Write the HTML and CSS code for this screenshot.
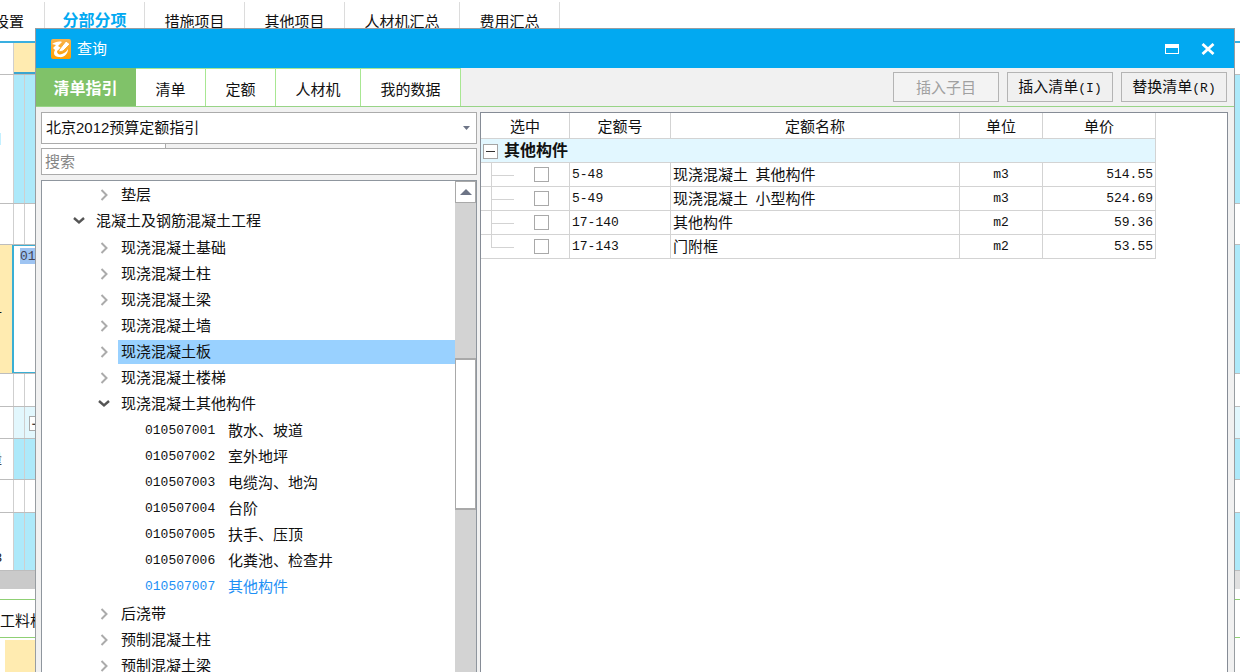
FILE: index.html
```html
<!DOCTYPE html>
<html lang="zh-CN">
<head>
<meta charset="utf-8">
<title>查询</title>
<link rel="stylesheet" href="styles.css">
</head>
<body>
<svg class="defs" aria-hidden="true">
  <symbol id="closed" viewBox="0 0 16 16"><path d="M5.5 3 L10.5 8 L5.5 13" fill="none" stroke="#ababab" stroke-width="2"/></symbol>
  <symbol id="open" viewBox="0 0 16 16"><path d="M3 5 L8 9.5 L13 5" fill="none" stroke="#555" stroke-width="2.4"/></symbol>
</svg>

<main class="app">
  <nav class="app-tabs">
    <a class="app-tab first" href="#">设置</a>
    <a class="app-tab current" href="#">分部分项</a>
    <a class="app-tab" href="#">措施项目</a>
    <a class="app-tab" href="#">其他项目</a>
    <a class="app-tab wide" href="#">人材机汇总</a>
    <a class="app-tab" href="#">费用汇总</a>
  </nav>
  <div class="sheet">
    <div class="line head"><i></i><b></b><u></u></div>
    <div class="line blue h129"><i><span>目</span></i><i></i><b></b><u></u></div>
    <div class="line h41"><i></i><i></i><b></b><u></u></div>
    <div class="line active h129"><i><span>1</span></i><b><mark class="mono">01</mark></b><u></u></div>
    <div class="line h33"><i></i><i></i><b></b><u></u></div>
    <div class="line pale h32"><i></i><i></i><b><em>−</em></b><u></u></div>
    <div class="line blue h41"><i><span>量</span></i><i></i><b></b><u></u></div>
    <div class="line h33"><i></i><i></i><b></b><u></u></div>
    <div class="line blue h58"><i><span class="low">3</span></i><i></i><b></b><u></u></div>
  </div>
  <div class="hscroll"></div>
  <div class="lower-tabs"><a href="#">工料机显示</a></div>
  <div class="lower-head"></div>
</main>

<section class="dialog" role="dialog" aria-labelledby="dialog-title">
  <header class="title-bar">
    <svg class="logo" viewBox="0 0 20 20" aria-hidden="true">
      <defs><linearGradient id="gold" x1="0" y1="0" x2="0" y2="1"><stop offset="0" stop-color="#f9b24c"/><stop offset="1" stop-color="#ffa000"/></linearGradient></defs>
      <rect width="20" height="20" rx="2" fill="url(#gold)"/>
      <path d="M1 5 C4 3 8 2 11 3 L7 7 L10 9 L6 12 C6 15 8 16 11 15 C14 14 16 12 17 10 C17 15 13 19 8 18 C3 18 2 14 4 11 L2 9 L5 6 Z" fill="#fff"/>
      <path d="M8 11 L15 2 L19 5 L12 12 L8 13 Z" fill="#fff" stroke="#f8ab34" stroke-width="1"/>
    </svg>
    <h1 id="dialog-title">查询</h1>
    <button class="win-button" aria-label="最大化"><svg viewBox="0 0 14 10" width="14" height="10"><path d="M0 0H14V10H0Z M1 4V9H13V4Z" fill="#fff" fill-rule="evenodd"/></svg></button>
    <button class="win-button" aria-label="关闭"><svg viewBox="0 0 14 12" width="14" height="12"><path d="M1.5 1 L12.5 11 M12.5 1 L1.5 11" stroke="#fff" stroke-width="2.8"/></svg></button>
  </header>

  <div class="tool-bar">
    <button class="tab current">清单指引</button>
    <button class="tab short">清单</button>
    <button class="tab short">定额</button>
    <button class="tab medium">人材机</button>
    <button class="tab">我的数据</button>
    <div class="actions">
      <button class="action" disabled>插入子目</button>
      <button class="action">插入清单<span class="mono">(I)</span></button>
      <button class="action">替换清单<span class="mono">(R)</span></button>
    </div>
  </div>

  <div class="panes">
    <div class="left-pane">
      <div class="combo">
        <select aria-label="定额指引"><option>北京2012预算定额指引</option></select>
        <svg viewBox="0 0 7 4" width="7" height="4" aria-hidden="true"><path d="M0 0H7L3.5 4Z" fill="#6d7486"/></svg>
      </div>
      <div class="combo-foot"></div>
      <input class="search" type="text" placeholder="搜索" aria-label="搜索">
      <div class="tree-box">
        <ul class="tree">
          <li><ul>
            <li><div class="node"><button aria-label="展开"><svg><use href="#closed"/></svg></button><span>垫层</span></div></li>
          </ul></li>
          <li><div class="node"><button aria-label="折叠"><svg><use href="#open"/></svg></button><span>混凝土及钢筋混凝土工程</span></div>
            <ul class="group">
              <li><div class="node"><button aria-label="展开"><svg><use href="#closed"/></svg></button><span>现浇混凝土基础</span></div></li>
              <li><div class="node"><button aria-label="展开"><svg><use href="#closed"/></svg></button><span>现浇混凝土柱</span></div></li>
              <li><div class="node"><button aria-label="展开"><svg><use href="#closed"/></svg></button><span>现浇混凝土梁</span></div></li>
              <li><div class="node"><button aria-label="展开"><svg><use href="#closed"/></svg></button><span>现浇混凝土墙</span></div></li>
              <li><div class="node selected"><button aria-label="展开"><svg><use href="#closed"/></svg></button><span>现浇混凝土板</span></div></li>
              <li><div class="node"><button aria-label="展开"><svg><use href="#closed"/></svg></button><span>现浇混凝土楼梯</span></div></li>
              <li><div class="node"><button aria-label="折叠"><svg><use href="#open"/></svg></button><span>现浇混凝土其他构件</span></div>
                <ul class="group">
                  <li><div class="node leaf"><code>010507001</code>散水、坡道</div></li>
                  <li><div class="node leaf"><code>010507002</code>室外地坪</div></li>
                  <li><div class="node leaf"><code>010507003</code>电缆沟、地沟</div></li>
                  <li><div class="node leaf"><code>010507004</code>台阶</div></li>
                  <li><div class="node leaf"><code>010507005</code>扶手、压顶</div></li>
                  <li><div class="node leaf"><code>010507006</code>化粪池、检查井</div></li>
                  <li><div class="node leaf picked"><code>010507007</code>其他构件</div></li>
                </ul>
              </li>
              <li><div class="node"><button aria-label="展开"><svg><use href="#closed"/></svg></button><span>后浇带</span></div></li>
              <li><div class="node"><button aria-label="展开"><svg><use href="#closed"/></svg></button><span>预制混凝土柱</span></div></li>
              <li><div class="node"><button aria-label="展开"><svg><use href="#closed"/></svg></button><span>预制混凝土梁</span></div></li>
            </ul>
          </li>
        </ul>
        <div class="scroll-bar">
          <button aria-label="向上滚动"><svg viewBox="0 0 12 6" width="12" height="6"><path d="M6 0L12 6H0Z" fill="#6d7486"/></svg></button>
          <div class="thumb"></div>
        </div>
      </div>
    </div>

    <div class="right-pane">
      <table>
        <colgroup><col class="c-pick"><col class="c-code"><col class="c-name"><col class="c-unit"><col class="c-price"></colgroup>
        <thead><tr><th>选中</th><th>定额号</th><th>定额名称</th><th>单位</th><th>单价</th></tr></thead>
        <tbody>
          <tr class="group-row"><td colspan="5"><div><button aria-label="折叠"></button>其他构件</div></td></tr>
          <tr><td class="pick"><input type="checkbox" aria-label="5-48"></td><td class="mono">5-48</td><td>现浇混凝土&ensp;其他构件</td><td class="unit mono">m3</td><td class="price mono">514.55</td></tr>
          <tr><td class="pick"><input type="checkbox" aria-label="5-49"></td><td class="mono">5-49</td><td>现浇混凝土&ensp;小型构件</td><td class="unit mono">m3</td><td class="price mono">524.69</td></tr>
          <tr><td class="pick"><input type="checkbox" aria-label="17-140"></td><td class="mono">17-140</td><td>其他构件</td><td class="unit mono">m2</td><td class="price mono">59.36</td></tr>
          <tr><td class="pick last"><input type="checkbox" aria-label="17-143"></td><td class="mono">17-143</td><td>门附框</td><td class="unit mono">m2</td><td class="price mono">53.55</td></tr>
        </tbody>
      </table>
    </div>
  </div>
</section>
</body>
</html>
```
FILE: styles.css
```css
* { box-sizing: border-box; }

body {
  margin: 0;
  height: 100vh;
  position: relative;
  overflow: hidden;
  background: #fff;
  color: #111;
  font: 15px/24px "Liberation Sans", "Noto Sans CJK SC", sans-serif;
}

button, input, select { font: inherit; color: inherit; margin: 0; padding: 0; border-radius: 0; }
button { background: none; border: 0; }
ul { list-style: none; margin: 0; padding: 0; }
a { color: inherit; text-decoration: none; }
.defs { display: none; }
.mono, code { font-family: "Liberation Mono", monospace; font-size: 13px; }

/* Main window behind the dialog */
.app-tabs { display: flex; height: 43px; padding-top: 2px; border-bottom: 2px solid #3aafe0; }
.app-tab { width: 100px; border-right: 1px solid #dcdcdc; text-align: center; line-height: 39px; white-space: nowrap; }
.app-tab.first { width: 45px; display: flex; justify-content: flex-end; padding-right: 20px; }
.app-tab.wide { width: 115px; }
.app-tab.current { color: #02a9f1; font-size: 16px; font-weight: bold; line-height: 37px; }

.line { display: flex; border-bottom: 1px solid #bdbdbd; }
.line i { flex: 0 0 11px; display: flex; align-items: center; overflow: hidden; border-right: 1px solid #cfcfcf; font-style: normal; }
.line i:first-child { flex-basis: 14px; }
.line i span { width: 2px; overflow: hidden; display: flex; justify-content: flex-end; font-size: 13px; }
.line i .low { align-self: flex-end; }
.line b { flex: 1; font-weight: normal; }
.line u { flex: 0 0 20px; }
.line.head { height: 32px; }
.head b { background: #ffebb0; border-bottom: 2px solid #3aa5d0; }
.blue i + i, .blue b, .blue u, .active u { background: #ade9fa; }
.pale i + i, .pale b, .pale u { background: #e2f7fd; }
.active i { background: #ffebb0; }
.active i:first-child { border-right: 2px solid #3aafd4; }
.active b { padding: 2px 0 0 6px; border: solid #3aafd4; border-width: 1px 0; }
.active mark { display: block; height: 16px; line-height: 17px; width: 30px; background: #9ec4f2; color: #445; }
.pale em { display: block; width: 14px; height: 15px; margin: 9px 0 0 4px; border: 1px solid #aaa; background: #fff; font-style: normal; line-height: 13px; text-align: center; }
.h129 { height: 129px; }
.h58 { height: 58px; }
.h41 { height: 41px; }
.h33 { height: 33px; }
.h32 { height: 32px; }
.hscroll { height: 18px; margin-right: 20px; background: #cacaca; box-shadow: 20px 0 #e0e0e0; }
.lower-tabs { margin-top: 10px; border: solid #8fd074; border-width: 1px 0; height: 39px; line-height: 42px; }
.lower-head { height: 34px; margin: 2px 20px 0 5px; border: solid #3aa5d0; border-width: 0 0 2px; background: #ffebb0; }

/* Dialog */
.dialog {
  position: absolute;
  inset: 28px 5px 0 35px;
  display: flex;
  flex-direction: column;
  border: 1px solid #989da1;
  border-bottom: 0;
  background: #f1f1f1;
}
.title-bar { display: flex; align-items: center; height: 39px; padding: 0 13px 0 15px; background: #02a9f1; color: #fff; }
.logo { width: 20px; height: 20px; }
.title-bar h1 { flex: 1; margin: 0 0 0 6px; font-size: 15px; font-weight: normal; }
.win-button { display: grid; place-items: center; width: 26px; height: 26px; margin-left: 10px; }

.tool-bar { display: flex; height: 39px; border-bottom: 1px solid #98d487; }
.tab { width: 100px; padding-top: 4px; background: #fff; border: solid #a8e792; border-width: 1px 1px 0 0; }
.tab.short { width: 70px; }
.tab.medium { width: 85px; }
.tab.current { width: 100px; padding-top: 2px; background: #80c269; border-color: #80c269; color: #fff; font-size: 16px; font-weight: bold; }
.actions { display: flex; gap: 8px; margin-left: auto; padding: 4px 7px; }
.action { width: 106px; padding-top: 2px; border: 1px solid #b4b4b4; background: #f0f0f0; }
.action:disabled { color: #a0a0a0; background: #f3f3f3; }

.panes { flex: 1; min-height: 0; display: flex; gap: 3px; padding: 5px 6px 0 5px; }
.left-pane { flex: 0 0 436px; display: flex; flex-direction: column; }
.combo { display: flex; align-items: center; height: 32px; padding-right: 6px; background: #fff; border: 1px solid #ababab; }
.combo select { flex: 1; height: 30px; padding-left: 4px; appearance: none; border: 0; background: none; }
.combo-foot { width: 125px; height: 4px; background: #fff; border-right: 1px solid #ababab; }
.search { height: 27px; padding: 0 3px; border: 1px solid #ababab; background: #fff; }
.search::placeholder { color: #858585; opacity: 1; }

.tree-box { flex: 1; min-height: 0; display: flex; margin-top: 5px; border: 1px solid #8f969e; border-bottom: 0; background: #fff; }
.tree { flex: 1; min-width: 0; overflow: hidden; padding-top: 1px; }
.tree ul { padding-left: 25px; }
.tree .group { margin: 1px 0; }
.node { display: flex; align-items: center; height: 26px; padding-left: 29px; white-space: nowrap; }
.node button { width: 22px; height: 24px; display: flex; align-items: center; }
.node svg { width: 16px; height: 16px; }
.node span { flex: 1; padding-left: 3px; }
.selected span { background: #99d1ff; }
.leaf { padding-left: 53px; }
.leaf code { width: 83px; }
.picked { color: #1e90f5; }
.scroll-bar { flex: 0 0 21px; background: #d3d3d3; }
.scroll-bar button { display: grid; place-items: center; width: 100%; height: 22px; border: 1px solid #a9a9a9; background: #fff; }
.thumb { height: 152px; margin-top: 155px; border: 2px solid #a9a9a9; border-width: 2px 1px; background: #fff; }

.right-pane { flex: 1; min-width: 0; border: 1px solid #868c96; border-bottom: 0; background: #fff; }
table { width: 675px; table-layout: fixed; border-collapse: separate; border-spacing: 0; }
.c-pick { width: 89px; }
.c-code { width: 101px; }
.c-name { width: 289px; }
.c-unit { width: 83px; }
.c-price { width: 113px; }
th, td { height: 24px; padding: 1px 2px 0; border: solid #d3d3d3; border-width: 0 1px 1px 0; line-height: 22px; font-weight: normal; white-space: nowrap; text-align: left; }
th { height: 26px; padding-top: 2px; text-align: center; }
.group-row td { padding-top: 0; background: #e2f7ff; font-weight: bold; font-size: 16px; }
.group-row div { display: flex; align-items: center; height: 23px; gap: 6px; padding-top: 1px; }
.group-row button { display: grid; place-items: center; width: 15px; height: 15px; border: 1px solid #a5a5a5; background: #fff; }
.group-row button::before { content: ""; width: 9px; height: 1px; background: #333; }
.pick { position: relative; padding: 0 0 0 53px; }
.pick input { display: block; appearance: none; width: 15px; height: 15px; border: 1px solid #a9a9a9; background: #fff; }
.pick::before { content: ""; position: absolute; left: 10px; top: 0; width: 22px; height: 12px; border: solid #d3d3d3; border-width: 0 0 1px 1px; }
.pick::after { content: ""; position: absolute; left: 10px; top: 12px; bottom: 0; border-left: 1px solid #d3d3d3; }
.pick.last::after { content: none; }
.unit { text-align: center; }
.price { text-align: right; }
```
